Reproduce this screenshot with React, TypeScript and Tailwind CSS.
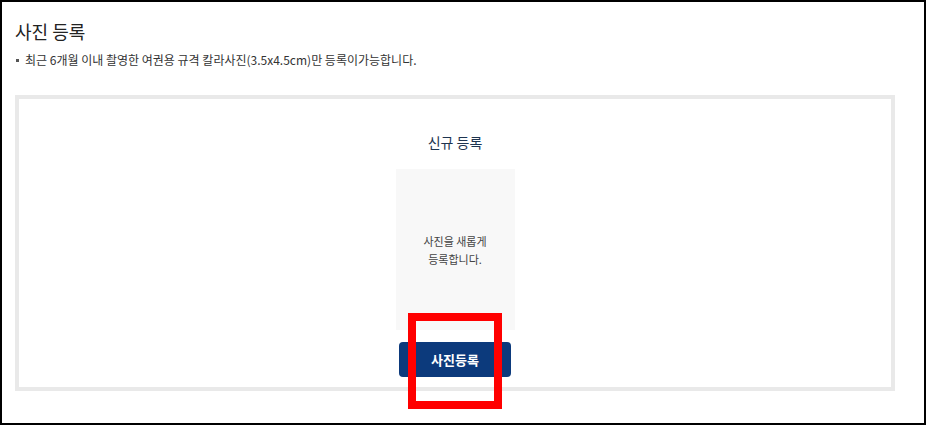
import React from "react";

const font = { fontFamily: '"Noto Sans CJK KR", "Noto Sans", sans-serif' };

const PhotoRegister = () => {
  return (
    <div
      className="relative w-[926px] h-[425px] border-2 border-black bg-white px-[13px] pt-[17px] overflow-hidden"
      style={font}
    >
      <h2 className="text-[18px] leading-[24px] text-[#222]">사진 등록</h2>
      <p className="mt-[9px] flex items-center text-[12px] leading-[16px] text-[#333]">
        <span className="inline-block w-[3px] h-[3px] bg-[#555] ml-[1px] mr-[6px]"></span>
        최근 6개월 이내 촬영한 여권용 규격 칼라사진(3.5x4.5cm)만 등록이가능합니다.
      </p>

      <div className="mt-[27px] w-[880px] h-[296px] border-4 border-[#e9e9e9] flex flex-col items-center pt-[33px]">
        <p className="text-[14px] leading-[20px] text-[#1e3450]">신규 등록</p>
        <div className="mt-[17px] w-[119px] h-[161px] bg-[#f8f8f8] flex flex-col items-center justify-center text-[11px] leading-[18px] text-[#444]">
          <span>사진을 새롭게</span>
          <span>등록합니다.</span>
        </div>
        <button className="mt-[12px] w-[112px] h-[35px] rounded-[4px] bg-[#0c3a7c] text-white text-[13px] font-bold">
          사진등록
        </button>
      </div>

      {/* highlight overlay */}
      <div className="absolute left-[406px] top-[311px] w-[94px] h-[96px] border-8 border-[#ff0000]"></div>
    </div>
  );
};

export default function App() {
  return <PhotoRegister />;
}
